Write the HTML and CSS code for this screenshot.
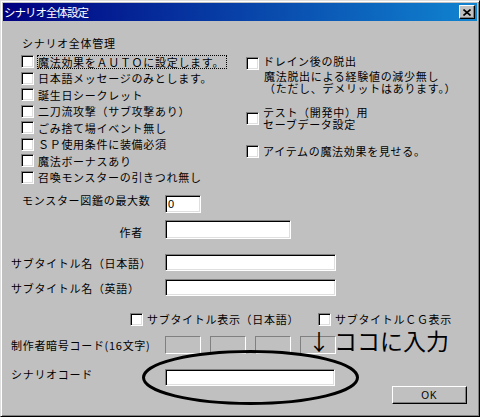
FILE: index.html
```html
<!DOCTYPE html>
<html lang="ja">
<head>
<meta charset="utf-8">
<title>シナリオ全体設定</title>
<link rel="stylesheet" href="styles.css">
</head>
<body>
<div class="window">
  <div class="titlebar">
    <span class="title">シナリオ全体設定</span>
    <button class="close" type="button" aria-label="閉じる">
      <svg width="8" height="7" viewBox="0 0 8 7"><path d="M0.5 0.5 L7.5 6.5 M7.5 0.5 L0.5 6.5" stroke="#000" stroke-width="1.6" fill="none"/></svg>
    </button>
  </div>
  <div class="client">
    <div class="top">
      <div class="col-left">
        <div class="group-label">シナリオ全体管理</div>
        <label class="check"><span class="box"></span><span class="text focus">魔法効果をＡＵＴＯに設定します。</span></label>
        <label class="check"><span class="box"></span><span class="text">日本語メッセージのみとします。</span></label>
        <label class="check"><span class="box"></span><span class="text">誕生日シークレット</span></label>
        <label class="check"><span class="box"></span><span class="text">二刀流攻撃（サブ攻撃あり）</span></label>
        <label class="check"><span class="box"></span><span class="text">ごみ捨て場イベント無し</span></label>
        <label class="check"><span class="box"></span><span class="text">ＳＰ使用条件に装備必須</span></label>
        <label class="check"><span class="box"></span><span class="text">魔法ボーナスあり</span></label>
        <label class="check"><span class="box"></span><span class="text">召喚モンスターの引きつれ無し</span></label>
      </div>
      <div class="col-right">
        <label class="check drain"><span class="box"></span><span class="text">ドレイン後の脱出</span></label>
        <div class="desc">魔法脱出による経験値の減少無し<br>（ただし、デメリットはあります。）</div>
        <label class="check multi"><span class="box"></span><span class="text">テスト（開発中）用<br>セーブデータ設定</span></label>
        <label class="check item"><span class="box"></span><span class="text">アイテムの魔法効果を見せる。</span></label>
      </div>
    </div>
    <div class="fields">
      <div class="field r1">
        <span class="label l-monster">モンスター図鑑の最大数</span>
        <input class="edit w-num" type="text" value="0">
      </div>
      <div class="field r2">
        <span class="label l-author">作者</span>
        <input class="edit w-author" type="text">
      </div>
      <div class="field r3">
        <span class="label">サブタイトル名（日本語）</span>
        <input class="edit w-long" type="text">
      </div>
      <div class="field r4">
        <span class="label">サブタイトル名（英語）</span>
        <input class="edit w-long" type="text">
      </div>
      <div class="opts">
        <label class="check opt1"><span class="box"></span><span class="text">サブタイトル表示（日本語）</span></label>
        <label class="check"><span class="box"></span><span class="text">サブタイトルＣＧ表示</span></label>
      </div>
      <div class="field r6">
        <span class="label">制作者暗号コード(16文字)</span>
        <div class="codes">
          <span class="code"></span><span class="code"></span><span class="code"></span><span class="code"></span>
        </div>
      </div>
      <div class="field r7">
        <span class="label">シナリオコード</span>
        <input class="edit w-code" type="text">
        <button class="ok" type="button">OK</button>
      </div>
    </div>
  </div>
  <svg class="ellipse" width="222" height="60" viewBox="0 0 222 60"><ellipse cx="110.5" cy="29.5" rx="107" ry="26" fill="none" stroke="#000" stroke-width="3"/></svg>
  <div class="note"><span class="arrow">↓</span>ココに入力</div>
</div>
</body>
</html>
```

FILE: styles.css
```css
html, body {
  margin: 0;
  padding: 0;
}
body {
  background: #c0c0c0;
  font-family: "Noto Sans CJK JP", "Noto Sans", sans-serif;
  font-size: 11px;
  color: #000;
}
.window {
  box-sizing: border-box;
  width: 480px;
  height: 417px;
  position: relative;
  background: #c0c0c0;
  border: 1px solid;
  border-color: #dfdfdf #000 #000 #dfdfdf;
  box-shadow: inset 1px 1px #fff, inset -1px -1px #808080;
  padding: 2px;
  display: flex;
  flex-direction: column;
}
.titlebar {
  flex: none;
  height: 18px;
  display: flex;
  align-items: flex-start;
  background: linear-gradient(to right, #000080, #1084d0);
  color: #fff;
}
.title {
  flex: 1;
  font-size: 11.5px;
  letter-spacing: -1px;
  line-height: 18px;
  padding-left: 1px;
}
.close {
  box-sizing: border-box;
  width: 16px;
  height: 14px;
  margin: 2px 2px 0 0;
  padding: 0;
  background: #c0c0c0;
  border: 1px solid;
  border-color: #fff #000 #000 #fff;
  box-shadow: inset -1px -1px #808080;
  display: flex;
  align-items: center;
  justify-content: center;
}
.close svg {
  display: block;
}
.client {
  flex: 1;
  display: flex;
  flex-direction: column;
}
.top {
  display: grid;
  grid-template-columns: 225px 1fr;
  padding: 14px 0 0 18px;
}
.group-label {
  padding-left: 1px;
  line-height: 16px;
  margin-bottom: 2px;
  letter-spacing: 0.7px;
}
.check {
  display: flex;
  align-items: center;
  height: 16px;
}
.col-left .check:nth-of-type(odd) {
  height: 17px;
}
.box {
  flex: none;
  box-sizing: border-box;
  width: 13px;
  height: 13px;
  background: #fff;
  border: 1px solid;
  border-color: #808080 #fff #fff #808080;
  box-shadow: inset 1px 1px #000, inset -1px -1px #dfdfdf;
}
.text {
  margin-left: 4px;
  line-height: 12px;
  letter-spacing: 0.7px;
  white-space: nowrap;
}
.text.focus {
  margin-left: 3px;
  border: 1px dotted #000;
  padding-right: 2px;
}
.col-right .drain {
  margin-top: 18px;
  align-items: flex-start;
}
.col-right .drain .box {
  margin-top: 4px;
}
.col-right .drain .text {
  line-height: 16px;
}
.desc {
  margin-top: 2px;
  padding-left: 18px;
  line-height: 11.5px;
  letter-spacing: 0.7px;
  white-space: nowrap;
}
.col-right .multi {
  margin-top: 13px;
  height: auto;
}
.col-right .multi .text {
  line-height: 11.5px;
}
.col-right .item {
  margin-top: 13px;
}
.fields {
  display: flex;
  flex-direction: column;
  padding-top: 10px;
}
.field {
  display: flex;
  align-items: flex-start;
}
.label {
  flex: none;
  box-sizing: border-box;
  width: 162px;
  padding-left: 8px;
  line-height: 16px;
  letter-spacing: 0.7px;
  white-space: nowrap;
}
.l-monster {
  padding-left: 19px;
}
.l-author {
  text-align: right;
  padding-right: 22px;
}
.edit {
  box-sizing: border-box;
  margin: 0;
  padding: 0 2px;
  background: #fff;
  border: 1px solid;
  border-color: #808080 #fff #fff #808080;
  box-shadow: inset 1px 1px #000, inset -1px -1px #dfdfdf;
  font-family: "Liberation Sans", sans-serif;
  font-size: 11px;
  color: #000;
  outline: none;
}
.w-num { width: 36px; height: 18px; }
.w-author { width: 126px; height: 19px; }
.w-long { width: 171px; height: 17px; }
.w-code { width: 170px; height: 17px; }
.r1 .label { margin-top: -3px; }
.r2 { margin-top: 7px; }
.r2 .label { margin-top: 4px; }
.r3 { margin-top: 14px; }
.r3 .label { margin-top: 1px; }
.r4 { margin-top: 8px; }
.r4 .label { margin-top: 1px; }
.opts {
  display: flex;
  align-items: center;
  height: 16px;
  margin-top: 15px;
  padding-left: 127px;
}
.opt1 {
  width: 188px;
}
.r6 {
  margin-top: 9px;
  align-items: center;
}
.codes {
  display: flex;
  gap: 9px;
}
.code {
  box-sizing: border-box;
  width: 36px;
  height: 18px;
  border: 1px solid;
  border-color: #808080 #fff #fff #808080;
}
.r7 {
  margin-top: 15px;
}
.r7 .label {
  margin-top: -3px;
}
.ok {
  box-sizing: border-box;
  width: 75px;
  height: 18px;
  margin: 17px 10px 0 auto;
  padding: 0;
  background: #c0c0c0;
  border: 1px solid;
  border-color: #fff #000 #000 #fff;
  box-shadow: inset -1px -1px #808080;
  font-family: "Liberation Sans", sans-serif;
  font-size: 10px;
  letter-spacing: 1px;
  color: #000;
}
.ellipse {
  position: absolute;
  left: 139px;
  top: 347px;
  pointer-events: none;
}
.note {
  position: absolute;
  left: 307px;
  top: 327px;
  display: flex;
  align-items: center;
  font-size: 23px;
  line-height: 24px;
  white-space: nowrap;
}
.arrow {
  width: 22px;
  margin-right: 4px;
  text-align: center;
  font-size: 22px;
}
```
